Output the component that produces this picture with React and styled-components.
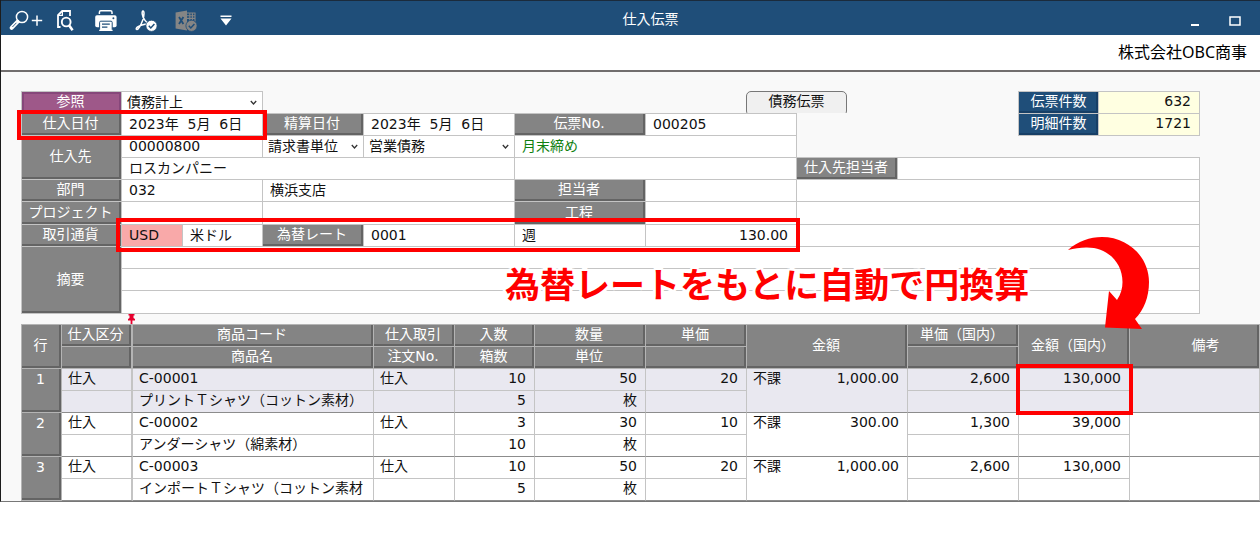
import React from "react";
import styled, { createGlobalStyle, css } from "styled-components";

const c = {
  bar: "#1f4e79",
  label: "#848484",
  labelDark: "#646464",
  line: "#c4c4c4",
  red: "#ff0000",
};

const Global = createGlobalStyle`
  *, *::before, *::after { box-sizing: border-box; }
  body {
    margin: 0;
    background: #fff;
    color: #111;
    font: 14px/20px "DejaVu Sans", "Noto Sans CJK JP", sans-serif;
  }
  input, select, button { font: inherit; color: inherit; }
`;

const Window = styled.div`
  border-left: 1px solid #1c1c1c;
  border-bottom: 1px solid #777;
  background: #f9f9f9;
  overflow: hidden;
`;

const TitleBar = styled.header`
  display: grid;
  grid-template-columns: 240px 1fr 200px;
  height: 35px;
  border-top: 1px solid #1b2b3c;
  background: ${c.bar};
  color: #fff;
`;

const Tools = styled.div`
  display: flex;
  align-items: center;
  padding: 4px 0 0 5px;
`;

const ToolButton = styled.button`
  display: flex;
  justify-content: center;
  flex: none;
  width: 40px;
  padding: 0;
  border: 0;
  background: none;
  svg { display: block; overflow: visible; }
`;

const Title = styled.h1`
  margin: 0;
  font-size: 14px;
  font-weight: 400;
  line-height: 36px;
  text-align: center;
`;

const Controls = styled.div`
  display: flex;
  justify-content: flex-end;
  align-items: center;
  padding: 4px 5px 0 0;
`;

const Company = styled.div`
  height: 37px;
  padding-right: 13px;
  border-bottom: 2px solid #716e6e;
  background: #fff;
  color: #000;
  font-family: "Noto Sans", "Noto Sans CJK JP", sans-serif;
  font-size: 16px;
  line-height: 35px;
  text-align: right;
`;

const Content = styled.main`
  padding: 19px 0 0 20px;
`;

const Form = styled.form`
  position: relative;
  display: grid;
  grid-template-columns: 100px 61px 80px 101px 151px 131px 151px 101px 1fr;
  grid-template-rows: 22px 22px 22px 22px 22px 23px 22px 22px 22px 23px;
  margin: 0 61px 11px 0;
`;

const place = css`
  grid-column: ${(p) => p.$col};
  grid-row: ${(p) => p.$row};
`;

const bevel = css`
  background: ${c.label};
  color: #fff;
  box-shadow: inset -2px -2px 0 ${c.labelDark};
`;

const FieldLabel = styled.label`
  ${place}
  display: flex;
  align-items: center;
  justify-content: center;
  margin: 0 -1px -1px 0;
  border: 1px solid ${c.line};
  padding: 0 2px 3px 0;
  white-space: nowrap;
  ${bevel}
  ${(p) =>
    p.$accent &&
    css`
      background: #9e5889;
      box-shadow: inset 0 0 0 2px #86477a;
    `}
`;

const Field = styled.div`
  ${place}
  position: relative;
  display: flex;
  margin: 0 -1px -1px 0;
  border: 1px solid ${c.line};
  background: ${(p) => p.$bg || "#fff"};
  color: ${(p) => p.$color || "inherit"};
  > svg {
    position: absolute;
    right: 5px;
    top: 8px;
    pointer-events: none;
  }
`;

const TextInput = styled.input`
  flex: 1;
  min-width: 0;
  border: 0;
  outline: 0;
  padding: 0 8px 2px 7px;
  background: none;
  text-align: ${(p) => p.$align || "left"};
`;

const Select = styled.select`
  flex: 1;
  min-width: 0;
  border: 0;
  outline: 0;
  padding: 0 16px 2px 5px;
  background: none;
  appearance: none;
`;

const ButtonSlot = styled.div`
  ${place}
  justify-self: end;
  width: 101px;
  margin-right: 50px;
  overflow: hidden;
`;

const PlainButton = styled.button`
  width: 100%;
  height: 25px;
  padding: 0 0 5px;
  border: 1px solid #777;
  border-radius: 5px;
  background: #f0f0f0;
  line-height: 18px;
`;

const Counts = styled.dl`
  ${place}
  display: grid;
  grid-template-columns: 80px 102px;
  grid-auto-rows: 22px;
  justify-self: end;
  margin: 0 -1px 0 0;
`;

const CountName = styled.dt`
  margin: 0 -1px -1px 0;
  border: 1px solid ${c.line};
  background: ${c.bar};
  box-shadow: inset -1px -1px 0 1px #173f66;
  color: #fff;
  line-height: 19px;
  text-align: center;
`;

const CountValue = styled.dd`
  margin: 0 0 -1px;
  border: 1px solid ${c.line};
  padding-right: 8px;
  background: #ffffe1;
  line-height: 19px;
  text-align: right;
`;

const Highlight = styled.div`
  ${place}
  z-index: 1;
  margin: ${(p) => p.$bleed};
  border: 4px solid ${c.red};
  pointer-events: none;
`;

const Callout = styled.p`
  position: absolute;
  z-index: 2;
  left: 484px;
  top: 168px;
  margin: 0;
  color: ${c.red};
  font: 700 35px/48px "Noto Sans CJK JP", sans-serif;
  white-space: nowrap;
  text-shadow: 3px 0 #fff, -3px 0 #fff, 0 3px #fff, 0 -3px #fff, 2px 2px #fff,
    -2px 2px #fff, 2px -2px #fff, -2px -2px #fff;
`;

const Arrow = styled.svg`
  position: absolute;
  z-index: 3;
  left: 1047px;
  top: 146px;
`;

const TableArea = styled.div`
  position: relative;
`;

const Pin = styled.svg`
  position: absolute;
  left: 107px;
  top: -10px;
`;

const Table = styled.table`
  width: 100%;
  table-layout: fixed;
  border-collapse: separate;
  border-spacing: 0;
  border: solid #b4b4b4;
  border-width: 1px 0 0 1px;
`;

const Line = styled.tr`
  height: 22px;
  background: ${(p) => (p.$selected ? "#e9e8f0" : "#fff")};
`;

const Head = styled.th`
  border: solid #b4b4b4;
  border-width: 0 ${(p) => (p.$frozen ? 2 : 1)}px 1px 0;
  padding: 0 2px 3px 0;
  font-weight: 400;
  line-height: 18px;
  white-space: nowrap;
  ${bevel}
  ${(p) => p.$top && "padding-top: 1px; vertical-align: top;"}
  ${(p) => p.$wide && "padding-left: 24px;"}
`;

const Cell = styled.td`
  position: relative;
  border: solid ${c.line};
  border-width: 0 ${(p) => (p.$frozen ? 2 : 1)}px 1px 0;
  border-bottom-color: ${(p) => (p.$last ? "#8c8c8c" : c.line)};
  padding: 0 8px 0 6px;
  line-height: 18px;
  white-space: nowrap;
  overflow: ${(p) => (p.$open ? "visible" : "hidden")};
  text-align: ${(p) => (p.$num ? "right" : "left")};
  vertical-align: top;
`;

const AmountPair = styled.div`
  display: flex;
  justify-content: space-between;
`;

const CellHighlight = styled.div`
  position: absolute;
  z-index: 1;
  inset: -5px -4px -25px -3px;
  border: 4px solid ${c.red};
  pointer-events: none;
`;

const Chevron = () => (
  <svg width="7" height="6" viewBox="0 0 7 6" fill="none" stroke="#333" strokeWidth="1.3">
    <path d="M.8 1l2.7 3L6.2 1" />
  </svg>
);

const SearchIcon = () => (
  <svg width="34" height="22" viewBox="0 0 34 22" fill="none" stroke="#fff">
    <circle cx="13" cy="7" r="5.6" strokeWidth="1.5" />
    <path d="M8.6 11.6L2.6 17.8" strokeWidth="4" strokeLinecap="round" />
    <path d="M7.4 12.8L3.4 17" stroke={c.bar} strokeWidth=".9" />
    <path d="M28 5.4v10.4M22.8 10.6h10.4" strokeWidth="1.5" />
  </svg>
);

const PreviewIcon = () => (
  <svg width="22" height="22" viewBox="0 0 22 22" fill="none" stroke="#fff">
    <path d="M5.5 17H3V5.2L7.2 1H15v5" strokeWidth="1.8" />
    <path d="M7.4 1v4.4H3" strokeWidth="1.2" />
    <circle cx="11.2" cy="12" r="4.4" strokeWidth="1.9" />
    <path d="M14.2 15.6l3.4 4.6" strokeWidth="2.6" />
  </svg>
);

const PrintIcon = () => (
  <svg width="22" height="22" viewBox="0 0 22 22" fill="none" stroke="#fff">
    <path d="M4.4 4V2.2Q4.4.8 5.8.8h9.8q1.4 0 1.4 1.4V4" strokeWidth="1.5" />
    <rect x=".2" y="5.2" width="21.4" height="12" rx="1.8" fill="#fff" stroke="none" />
    <circle cx="18.4" cy="8.2" r="1" fill={c.bar} stroke="none" />
    <rect x="4.6" y="11.2" width="12.6" height="9.6" rx="1.2" fill="#fff" stroke={c.bar} strokeWidth="1" />
    <path d="M4.2 20.4h13.4" strokeWidth="1.2" />
    <path d="M7 14.2h7.8M7 17.2h5.4" stroke={c.bar} strokeWidth="1.3" />
  </svg>
);

const CheckBadge = ({ fill }) => (
  <>
    <circle cx="16.5" cy="15.8" r="5.6" fill={fill} stroke={c.bar} strokeWidth=".8" />
    <path d="M13.8 15.8l2 2.1 3.6-4" stroke={c.bar} strokeWidth="1.5" fill="none" />
  </>
);

const PdfIcon = () => (
  <svg width="22" height="22" viewBox="0 0 22 22" fill="none" stroke="#fff">
    <path
      d="M1.4 19.4C.2 17.8 4.2 15.2 10 14.2c5-.8 9-.3 8.6 1M1.4 19.4c2 .8 4.6-4.6 6.4-9.4C9.3 5.6 9.4 1 8 1S6.7 6 10 10.4c1.6 2.2 3.6 3.8 5.4 4.2"
      strokeWidth="1.5"
    />
    <CheckBadge fill="#fff" />
  </svg>
);

const ExcelIcon = () => (
  <svg width="22" height="22" viewBox="0 0 22 22" fill="none">
    <path d="M.6 2.4L12 .4v20.2L.6 18.4z" fill="#858585" />
    <path d="M4 7l4.400 7M8.400 7L4 14" stroke={c.bar} strokeWidth="1.8" />
    <path d="M12 3h8v8.500M12 5.700h8M12 8.400h8M14.800 3v8M17.400 3v8" stroke="#858585" strokeWidth="1.1" />
    <CheckBadge fill="#858585" />
  </svg>
);

const MoreIcon = () => (
  <svg width="12" height="12" viewBox="0 0 12 12" fill="#fff">
    <path d="M.5 .5h11v1.500H.5zM.5 3.500h11L6 10.500z" />
  </svg>
);

const tools = [
  ["検索", SearchIcon],
  ["プレビュー", PreviewIcon],
  ["印刷", PrintIcon],
  ["PDF", PdfIcon],
  ["Excel", ExcelIcon],
  ["その他", MoreIcon],
];

function Input({ id, label, col, row, value = "", align, bg, color }) {
  return (
    <Field $col={col} $row={row} $bg={bg} $color={color}>
      <TextInput id={id} aria-label={label} defaultValue={value} $align={align} />
    </Field>
  );
}

function Dropdown({ id, label, col, row, value }) {
  return (
    <Field $col={col} $row={row}>
      <Select id={id} aria-label={label} defaultValue={value}>
        <option>{value}</option>
      </Select>
      <Chevron />
    </Field>
  );
}

const items = [
  { code: "C-00001", name: "プリントＴシャツ（コットン素材）", per: "10", boxes: "5", qty: "50", price: "20", amount: "1,000.00", home: "2,600", total: "130,000" },
  { code: "C-00002", name: "アンダーシャツ（綿素材）", per: "3", boxes: "10", qty: "30", price: "10", amount: "300.00", home: "1,300", total: "39,000" },
  { code: "C-00003", name: "インポートＴシャツ（コットン素材", per: "10", boxes: "5", qty: "50", price: "20", amount: "1,000.00", home: "2,600", total: "130,000" },
];

const columns = [40, 71, 241, 81, 80, 111, 101, 161, 111, 111];

function ItemRows({ item, index }) {
  const selected = index === 0;
  return (
    <>
      <Line $selected={selected}>
        <Head rowSpan={2} $top scope="row">{index + 1}</Head>
        <Cell $frozen>仕入</Cell>
        <Cell>{item.code}</Cell>
        <Cell>仕入</Cell>
        <Cell $num>{item.per}</Cell>
        <Cell $num>{item.qty}</Cell>
        <Cell $num>{item.price}</Cell>
        <Cell rowSpan={2} $last>
          <AmountPair>
            <span>不課</span>
            <span>{item.amount}</span>
          </AmountPair>
        </Cell>
        <Cell $num>{item.home}</Cell>
        <Cell $num $open={selected}>
          {item.total}
          {selected && <CellHighlight />}
        </Cell>
        <Cell rowSpan={2} $last />
      </Line>
      <Line $selected={selected}>
        <Cell $last $frozen />
        <Cell $last>{item.name}</Cell>
        <Cell $last />
        <Cell $last $num>{item.boxes}</Cell>
        <Cell $last $num>枚</Cell>
        <Cell $last />
        <Cell $last />
        <Cell $last />
      </Line>
    </>
  );
}

export default function App() {
  return (
    <Window>
      <Global />
      <TitleBar>
        <Tools>
          {tools.map(([name, Icon]) => (
            <ToolButton key={name} type="button" aria-label={name}>
              <Icon />
            </ToolButton>
          ))}
        </Tools>
        <Title>仕入伝票</Title>
        <Controls>
          <ToolButton type="button" aria-label="最小化">
            <svg width="10" height="12" viewBox="0 0 10 12"><path d="M1 9h8v2H1z" fill="#fff" /></svg>
          </ToolButton>
          <ToolButton type="button" aria-label="最大化">
            <svg width="12" height="12" viewBox="0 0 12 12"><path d="M1 2h10v8H1z" fill="none" stroke="#fff" strokeWidth="1.5" /></svg>
          </ToolButton>
        </Controls>
      </TitleBar>
      <Company>株式会社OBC商事</Company>

      <Content>
        <Form onSubmit={(e) => e.preventDefault()}>
          <FieldLabel htmlFor="ref" $col="1" $row="1" $accent>参照</FieldLabel>
          <Dropdown id="ref" col="2 / 4" row="1" value="債務計上" />
          <ButtonSlot $col="7 / 9" $row="1">
            <PlainButton type="button">債務伝票</PlainButton>
          </ButtonSlot>
          <Counts $col="9" $row="1 / 3">
            <CountName>伝票件数</CountName>
            <CountValue>632</CountValue>
            <CountName>明細件数</CountName>
            <CountValue>1721</CountValue>
          </Counts>

          <FieldLabel htmlFor="date" $col="1" $row="2">仕入日付</FieldLabel>
          <Input id="date" col="2 / 4" row="2" value="2023年  5月  6日" />
          <FieldLabel htmlFor="settle" $col="4" $row="2">精算日付</FieldLabel>
          <Input id="settle" col="5" row="2" value="2023年  5月  6日" />
          <FieldLabel htmlFor="slip" $col="6" $row="2">伝票No.</FieldLabel>
          <Input id="slip" col="7" row="2" value="000205" />

          <FieldLabel htmlFor="supplier" $col="1" $row="3 / 5">仕入先</FieldLabel>
          <Input id="supplier" col="2 / 4" row="3" value="00000800" />
          <Dropdown label="請求単位" col="4" row="3" value="請求書単位" />
          <Dropdown label="債務区分" col="5" row="3" value="営業債務" />
          <Input label="締め" col="6 / 8" row="3" value="月末締め" color="#108010" />
          <Input label="仕入先名" col="2 / 6" row="4" value="ロスカンパニー" />
          <Input label="仕入先備考" col="6 / 8" row="4" />
          <FieldLabel htmlFor="contact" $col="8" $row="4">仕入先担当者</FieldLabel>
          <Input id="contact" col="9" row="4" />

          <FieldLabel htmlFor="dept" $col="1" $row="5">部門</FieldLabel>
          <Input id="dept" col="2 / 4" row="5" value="032" />
          <Input label="部門名" col="4 / 6" row="5" value="横浜支店" />
          <FieldLabel htmlFor="staff" $col="6" $row="5">担当者</FieldLabel>
          <Input id="staff" col="7" row="5" />
          <Input label="担当者名" col="8 / 10" row="5" />

          <FieldLabel htmlFor="project" $col="1" $row="6">プロジェクト</FieldLabel>
          <Input id="project" col="2 / 4" row="6" />
          <Input label="プロジェクト名" col="4 / 6" row="6" />
          <FieldLabel htmlFor="process" $col="6" $row="6">工程</FieldLabel>
          <Input id="process" col="7" row="6" />
          <Input label="工程名" col="8 / 10" row="6" />

          <FieldLabel htmlFor="currency" $col="1" $row="7">取引通貨</FieldLabel>
          <Input id="currency" col="2" row="7" value="USD" bg="#f9a9a9" />
          <Input label="通貨名" col="3" row="7" value="米ドル" />
          <FieldLabel htmlFor="rate" $col="4" $row="7">為替レート</FieldLabel>
          <Input id="rate" col="5" row="7" value="0001" />
          <Input label="レート区分" col="6" row="7" value="週" />
          <Input label="レート" col="7" row="7" value="130.00" align="right" />
          <Input label="通貨備考" col="8 / 10" row="7" />

          <FieldLabel htmlFor="memo1" $col="1" $row="8 / 11">摘要</FieldLabel>
          <Input id="memo1" col="2 / 10" row="8" />
          <Input label="摘要2" col="2 / 10" row="9" />
          <Input label="摘要3" col="2 / 10" row="10" />

          <Highlight $col="1 / 4" $row="2" $bleed="-3px -5px -5px -4px" />
          <Highlight $col="2 / 8" $row="7" $bleed="-6px -4px -6px -5px" />
          <Callout>為替レートをもとに自動で円換算</Callout>
          <Arrow width="82" height="93" viewBox="0 0 82 93" fill={c.red} aria-hidden="true">
            <path d="M0 13C10 4 22 0 34 0C60 0 81 20 81 45C81 60 76 73 67 82L74 92L37 90.5L41 54L49 63C53 57 54.5 51 54.5 45C54.5 26 40 10 18 10.5C12 10.5 6 11.5 0 13z" />
          </Arrow>
        </Form>

        <TableArea>
          <Pin width="7" height="10" viewBox="0 0 7 10" fill="#e6002d" aria-hidden="true">
            <path d="M.5 0h6v1.500H5.500V4L7 5v1.500H4.400V10H2.600V6.500H0V5L1.500 4V1.500H.5z" />
          </Pin>
          <Table>
            <colgroup>
              {columns.map((w, i) => <col key={i} width={w} />)}
              <col />
            </colgroup>
            <thead>
              <Line>
                <Head rowSpan={2}>行</Head>
                <Head $frozen>仕入区分</Head>
                <Head>商品コード</Head>
                <Head>仕入取引</Head>
                <Head>入数</Head>
                <Head>数量</Head>
                <Head>単価</Head>
                <Head rowSpan={2}>金額</Head>
                <Head>単価（国内）</Head>
                <Head rowSpan={2}>金額（国内）</Head>
                <Head rowSpan={2} $wide>備考</Head>
              </Line>
              <Line>
                <Head $frozen />
                <Head>商品名</Head>
                <Head>注文No.</Head>
                <Head>箱数</Head>
                <Head>単位</Head>
                <Head />
                <Head />
              </Line>
            </thead>
            <tbody>
              {items.map((item, i) => <ItemRows key={item.code} item={item} index={i} />)}
            </tbody>
          </Table>
        </TableArea>
      </Content>
    </Window>
  );
}
